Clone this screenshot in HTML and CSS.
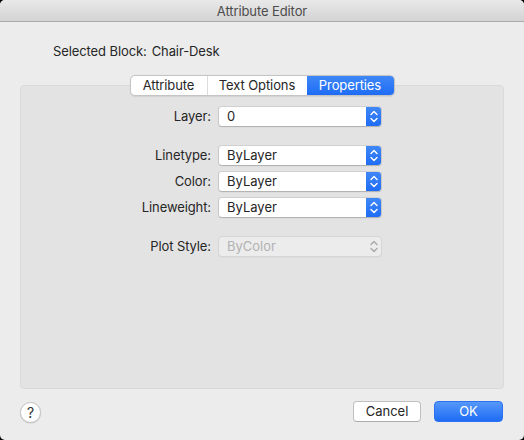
FILE: index.html
```html
<!DOCTYPE html>
<html>
<head>
<meta charset="utf-8">
<link rel="stylesheet" href="styles.css">
</head>
<body>
<div class="window">
  <div class="titlebar">Attribute Editor</div>
  <div class="content">
    <div class="selected"><span>Selected Block:</span><span>Chair-Desk</span></div>
    <div class="tabs">
      <div class="seg">
        <span class="tab t1">Attribute</span>
        <span class="tab t2">Text Options</span>
        <span class="tab t3 active">Properties</span>
      </div>
    </div>
    <div class="panel">
      <div class="form">
        <label>Layer:</label>
        <div class="popup"><span class="val">0</span><span class="arrow"><svg width="16" height="21" viewBox="0 0 16 21"><path d="M5 8.5 L8 5.5 L11 8.5 M5 12.5 L8 15.5 L11 12.5" fill="none" stroke="#fff" stroke-width="1.4" stroke-linecap="round" stroke-linejoin="round"/></svg></span></div>
        <div class="spacer"></div>
        <label>Linetype:</label>
        <div class="popup"><span class="val">ByLayer</span><span class="arrow"><svg width="16" height="21" viewBox="0 0 16 21"><path d="M5 8.5 L8 5.5 L11 8.5 M5 12.5 L8 15.5 L11 12.5" fill="none" stroke="#fff" stroke-width="1.4" stroke-linecap="round" stroke-linejoin="round"/></svg></span></div>
        <label>Color:</label>
        <div class="popup"><span class="val">ByLayer</span><span class="arrow"><svg width="16" height="21" viewBox="0 0 16 21"><path d="M5 8.5 L8 5.5 L11 8.5 M5 12.5 L8 15.5 L11 12.5" fill="none" stroke="#fff" stroke-width="1.4" stroke-linecap="round" stroke-linejoin="round"/></svg></span></div>
        <label>Lineweight:</label>
        <div class="popup"><span class="val">ByLayer</span><span class="arrow"><svg width="16" height="21" viewBox="0 0 16 21"><path d="M5 8.5 L8 5.5 L11 8.5 M5 12.5 L8 15.5 L11 12.5" fill="none" stroke="#fff" stroke-width="1.4" stroke-linecap="round" stroke-linejoin="round"/></svg></span></div>
        <div class="spacer"></div>
        <label>Plot Style:</label>
        <div class="popup disabled"><span class="val">ByColor</span><span class="arrow"><svg width="16" height="21" viewBox="0 0 16 21"><path d="M5 8.5 L8 5.5 L11 8.5 M5 12.5 L8 15.5 L11 12.5" fill="none" stroke="#a8a8a8" stroke-width="1.4" stroke-linecap="round" stroke-linejoin="round"/></svg></span></div>
      </div>
    </div>
    <div class="footer">
      <div class="help">?</div>
      <div class="buttons">
        <div class="btn cancel">Cancel</div>
        <div class="btn ok">OK</div>
      </div>
    </div>
  </div>
</div>
</body>
</html>
```

FILE: styles.css
```css
html, body {
  margin: 0;
  padding: 0;
  background: #000;
}
body {
  font-family: "Inter", "Liberation Sans", sans-serif;
  font-size: 13px;
  color: #262626;
}
.window {
  width: 524px;
  height: 440px;
  background: #ececec;
  border-radius: 5px;
  overflow: hidden;
  display: flex;
  flex-direction: column;
}
.titlebar {
  height: 22px;
  box-sizing: border-box;
  background: linear-gradient(#e9e9e9, #d3d3d3);
  border-bottom: 1px solid #ababab;
  text-align: center;
  line-height: 22px;
  color: #4c4c4c;
  letter-spacing: -0.1px;
}
.content {
  flex: 1;
  padding: 0 20px 0 20px;
  display: flex;
  flex-direction: column;
}
.selected {
  margin-top: 20px;
  margin-left: 33px;
  height: 18px;
  line-height: 18px;
  display: flex;
  gap: 5px;
  letter-spacing: -0.1px;
}
.tabs {
  margin-top: 15px;
  display: flex;
  justify-content: center;
  position: relative;
  z-index: 2;
}
.seg {
  display: flex;
  height: 21px;
  box-sizing: border-box;
  background: #fff;
  border: 1px solid #c4c4c4;
  border-radius: 5px;
  box-shadow: 0 0.5px 1px rgba(0,0,0,0.08);
  overflow: hidden;
}
.tab {
  line-height: 19px;
  text-align: center;
  color: #262626;
  letter-spacing: -0.1px;
}
.t1 { width: 76px; border-right: 1px solid #dcdcdc; }
.t2 { width: 99px; }
.t3 { width: 87px; }
.tab.active {
  background: linear-gradient(#3f87f7, #1e6cf5);
  color: #fff;
}
.panel {
  margin-top: -11px;
  height: 304px;
  box-sizing: border-box;
  background: #e3e3e3;
  border: 1px solid #dadada;
  border-radius: 4px;
  padding-top: 20px;
}
.form {
  display: grid;
  grid-template-columns: 190px 164px;
  column-gap: 7px;
  row-gap: 5px;
  align-items: center;
}
.form label {
  text-align: right;
  line-height: 21px;
  letter-spacing: -0.1px;
}
.spacer {
  grid-column: 1 / 3;
  height: 8px;
}
.popup {
  height: 21px;
  box-sizing: border-box;
  background: #fff;
  border: 1px solid #c8c8c8;
  border-top-color: #d0d0d0;
  border-bottom-color: #b4b4b4;
  border-radius: 4px;
  display: flex;
  align-items: center;
  overflow: hidden;
  box-shadow: 0 0.5px 0.5px rgba(0,0,0,0.05);
}
.popup .val {
  flex: 1;
  padding-left: 8px;
  line-height: 19px;
}
.popup .arrow {
  width: 16px;
  height: 21px;
  margin-top: -1px;
  margin-bottom: -1px;
  margin-right: -1px;
  background: linear-gradient(#4189f7, #1e6bf5);
  display: flex;
}
.popup.disabled {
  background: #ececec;
  border-color: #d6d6d6;
}
.popup.disabled .val { color: #b2b2b2; }
.popup.disabled .arrow { background: transparent; }
.footer {
  margin-top: 12px;
  height: 21px;
  display: flex;
  justify-content: space-between;
  align-items: center;
}
.help {
  width: 21px;
  height: 21px;
  box-sizing: border-box;
  border-radius: 50%;
  background: #fff;
  border: 1px solid #c4c4c4;
  box-shadow: 0 0.5px 1px rgba(0,0,0,0.15);
  text-align: center;
  line-height: 19px;
  font-size: 14px;
  color: #303030;
  margin-top: 1px;
}
.buttons {
  display: flex;
  gap: 13px;
  padding-right: 1px;
}
.btn {
  height: 21px;
  box-sizing: border-box;
  border-radius: 4px;
  text-align: center;
  line-height: 19px;
}
.cancel {
  width: 68px;
  background: #fff;
  border: 1px solid #c0c0c0;
  border-bottom-color: #adadad;
  color: #262626;
}
.ok {
  width: 69px;
  background: linear-gradient(#5698f8, #1e6cf5);
  border: 1px solid #2a72f0;
  color: #fff;
}
```
